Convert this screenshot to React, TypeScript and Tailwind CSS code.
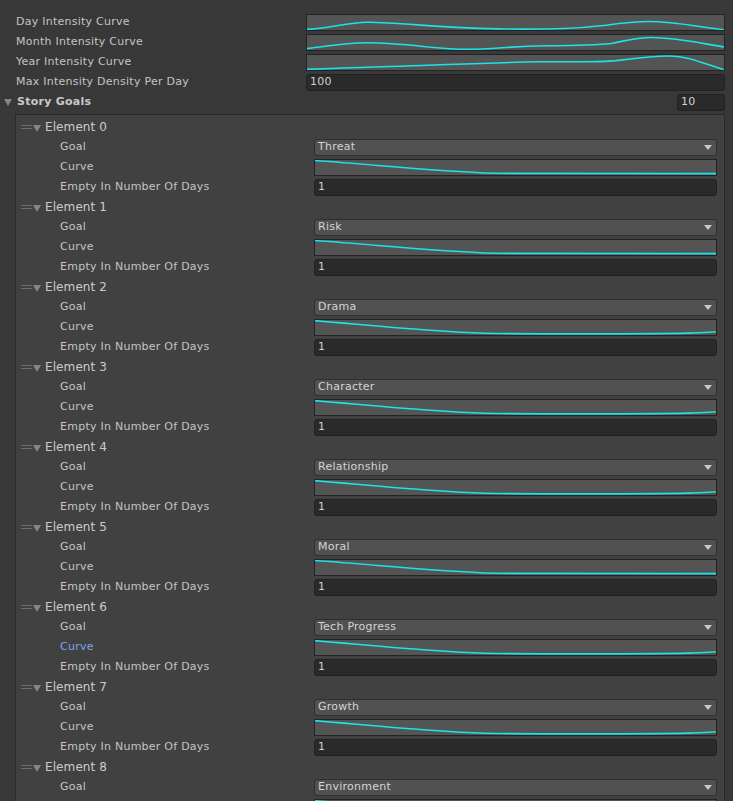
import React from "react";

// rough shapes of the AnimationCurve previews, in field pixels
const topCurves = {
  day: "M0,15.3 C20,15 40,8 60,7.8 C90,7.5 140,14.5 200,15 C250,15.3 270,14.5 300,11 C320,8 330,7 343,7 C365,7 390,12 418,15.7",
  month:
    "M0,14.5 C20,12 40,8.3 60,8.3 C100,8.5 130,15.3 160,15.3 C190,15.3 200,12 240,11.5 C280,11 290,10.7 305,9 C320,6 330,2.7 345,2.7 C370,2.7 395,9 418,12.7",
  year: "M0,15.3 C30,14.5 40,13.5 60,13 C120,11.5 180,8 234,7.2 C270,7 290,8 310,6 C330,3 345,1 365,1 C380,1 395,8 418,15.7",
};

const fall = "M0,0.6 C60,5 120,12 180,14.2 L403,14.5";
const dip = "M0,0.7 C50,5 110,12 170,14.2 C220,15 330,15 375,14 C390,13.5 395,13 403,12.6";

const goals = [
  { name: "Threat", curve: fall },
  { name: "Risk", curve: fall },
  { name: "Drama", curve: dip },
  { name: "Character", curve: dip },
  { name: "Relationship", curve: dip },
  { name: "Moral", curve: fall },
  { name: "Tech Progress", curve: dip, active: true },
  { name: "Growth", curve: dip },
  { name: "Environment", curve: dip },
];

const CurveField = ({ d, w }: { d: string; w: number }) => (
  <div className="h-[17px] flex-1 overflow-hidden border border-[#232323] bg-[#545454]">
    <svg className="block h-full w-full" viewBox={`0 0 ${w} 16`} preserveAspectRatio="none">
      <path d={d} fill="none" stroke="#19e4e8" strokeWidth={1.6} vectorEffect="non-scaling-stroke" />
    </svg>
  </div>
);

const IntField = ({ value, className = "" }: { value: string; className?: string }) => (
  <div
    className={`flex h-[17px] items-center rounded-[3px] border border-[#212121] bg-[#2a2a2a] pl-[3px] pt-px text-[#d2d2d2] ${className}`}
  >
    {value}
  </div>
);

const Dropdown = ({ value }: { value: string }) => (
  <div className="flex h-[17px] flex-1 items-center justify-between rounded-[3px] border border-[#2f2f2f] bg-[#515151] pl-[3px] pr-[4px] text-[#d4d4d4]">
    <span>{value}</span>
    <svg width="8" height="5" viewBox="0 0 8 5" className="block">
      <path d="M0,0 L8,0 L4,5 Z" fill="#c8c8c8" />
    </svg>
  </div>
);

const Row = ({ label, children }: { label: string; children: React.ReactNode }) => (
  <div className="flex h-5 items-center pl-4 pr-2">
    <div className="w-[290px] shrink-0">{label}</div>
    {children}
  </div>
);

const SubRow = ({
  label,
  active,
  children,
}: {
  label: string;
  active?: boolean;
  children: React.ReactNode;
}) => (
  <div className="flex h-5 items-center pl-[44px] pr-[7px]">
    <div className={`w-[254px] shrink-0 ${active ? "text-[#7ba6e8]" : ""}`}>{label}</div>
    {children}
  </div>
);

const Foldout = ({ className = "" }: { className?: string }) => (
  <svg width="8" height="7" viewBox="0 0 8 7" className={`block shrink-0 ${className}`}>
    <path d="M0,0 L8,0 L4,7 Z" fill="#858585" />
  </svg>
);

export default function App() {
  return (
    <div className="h-[801px] w-[733px] overflow-hidden bg-[#383838] pt-[12px] font-['DejaVu_Sans',sans-serif] text-[11px] tracking-[0.25px] text-[#c4c4c4]">
      <Row label="Day Intensity Curve">
        <CurveField d={topCurves.day} w={418} />
      </Row>
      <Row label="Month Intensity Curve">
        <CurveField d={topCurves.month} w={418} />
      </Row>
      <Row label="Year Intensity Curve">
        <CurveField d={topCurves.year} w={418} />
      </Row>
      <Row label="Max Intensity Density Per Day">
        <IntField value="100" className="flex-1" />
      </Row>

      <div className="flex h-5 items-center pl-1 pr-2">
        <Foldout />
        <span className="ml-[5px] font-bold text-[#c8c8c8]">Story Goals</span>
        <div className="flex-1" />
        <IntField value="10" className="w-[48px]" />
      </div>

      <div className="ml-[15px] mr-2 mt-[2px] border border-[#2a2a2a] bg-[#414141] pt-[2px]">
        {goals.map((g, i) => (
          <div key={i}>
            <div className="flex h-5 items-center pl-[5px]">
              <div className="flex w-[11px] flex-col gap-[2px]">
                <div className="h-px bg-[#6c6c6c]" />
                <div className="h-px bg-[#6c6c6c]" />
              </div>
              <Foldout className="ml-px mt-[2px]" />
              <span className="ml-[4px] text-[12px] tracking-[0.1px] text-[#cbcbcb]">Element {i}</span>
            </div>
            <SubRow label="Goal">
              <Dropdown value={g.name} />
            </SubRow>
            <SubRow label="Curve" active={g.active}>
              <CurveField d={g.curve} w={403} />
            </SubRow>
            <SubRow label="Empty In Number Of Days">
              <IntField value="1" className="flex-1" />
            </SubRow>
          </div>
        ))}
      </div>
    </div>
  );
}
